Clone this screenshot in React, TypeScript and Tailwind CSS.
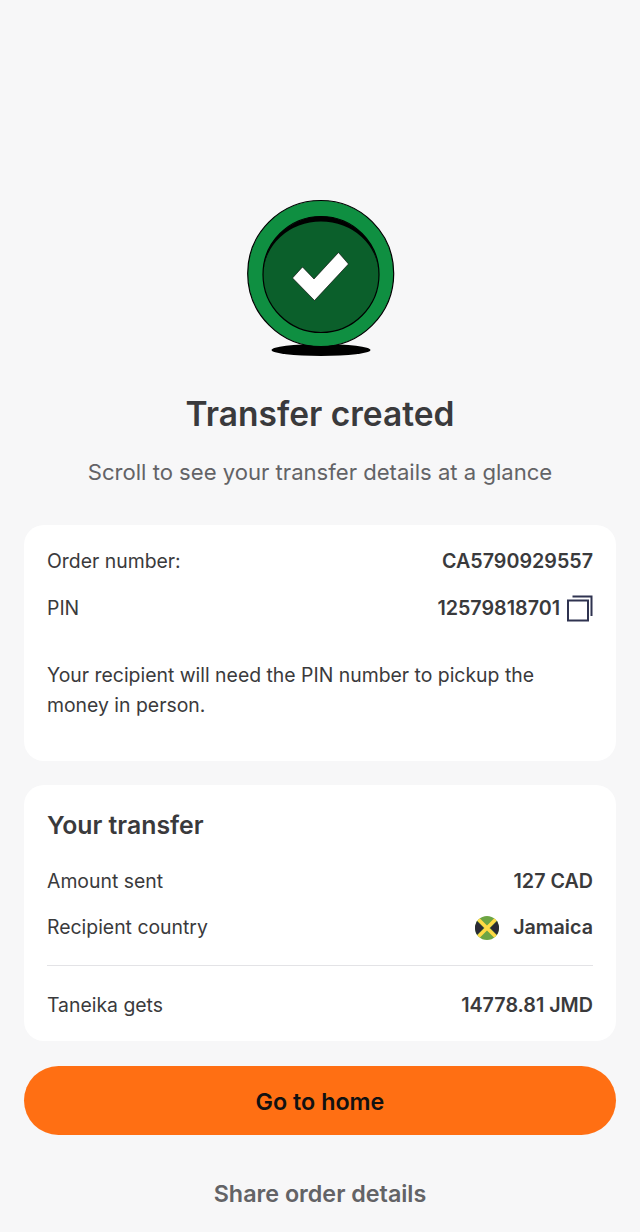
import React from "react";

function SuccessBadge() {
  return (
    <svg width="180" height="180" viewBox="0 0 180 180" className="block">
      <ellipse cx="91" cy="160" rx="49.5" ry="6" fill="#000" />
      <circle cx="90.7" cy="83.5" r="73" fill="#0f8f41" stroke="#000" strokeWidth="1.2" />
      <circle cx="91" cy="84.5" r="58" fill="#0b5f2b" stroke="#000" strokeWidth="1.2" />
      <path d="M33.5 84 A57.5 57.5 0 0 1 148.5 84 A57.5 52.5 0 0 0 33.5 84 Z" fill="#000" />
      <polygon points="62.5,88 72.5,77 84,89 108.5,62.5 118.5,74 84.5,110.5" fill="#fff" stroke="#000" strokeWidth="0.6" />
    </svg>
  );
}

function CopyIcon() {
  return (
    <svg width="28" height="28" viewBox="0 0 28 28" fill="none" stroke="#2f3350" strokeWidth="2">
      <rect x="2" y="6.5" width="20" height="20" />
      <path d="M6.5 2.5H25.5V22" />
    </svg>
  );
}

function JamaicaFlag() {
  return (
    <svg width="24" height="24" viewBox="0 0 24 24" className="block">
      <defs>
        <clipPath id="flag-clip">
          <circle cx="12" cy="12" r="12" />
        </clipPath>
      </defs>
      <g clipPath="url(#flag-clip)">
        <rect width="24" height="24" fill="#6da544" />
        <polygon points="0,3 9,12 0,21" fill="#2a2a35" />
        <polygon points="24,3 15,12 24,21" fill="#2a2a35" />
        <path d="M0 0 L24 24 M24 0 L0 24" stroke="#ffda44" strokeWidth="3.5" />
      </g>
    </svg>
  );
}

function Row({ label, children }: { label: string; children: React.ReactNode }) {
  return (
    <div className="flex items-center justify-between h-[28px] pt-[2px] text-[19.4px] text-[#3a3a3c]">
      <span>{label}</span>
      <span className="flex items-center font-semibold text-[19.7px]">{children}</span>
    </div>
  );
}

export default function App() {
  return (
    <div
      className="w-[640px] h-[1232px] overflow-hidden bg-[#f7f7f8] flex flex-col items-center pt-[190px]"
      style={{ fontFamily: "Inter, sans-serif" }}
    >
      <SuccessBadge />
      <h1 className="mt-[24px] text-[33.5px] leading-[40px] font-semibold text-[#3a3a3c]">Transfer created</h1>
      <p className="mt-[23px] text-[22.1px] leading-[30px] text-[#636366]">
        Scroll to see your transfer details at a glance
      </p>

      <div className="mt-[38px] w-[592px] h-[236px] bg-white rounded-[20px] px-[23px] pt-[22px]">
        <Row label="Order number:">CA5790929557</Row>
        <div className="mt-[19px]">
          <Row label="PIN">
            12579818701
            <span className="ml-[6px] -mr-[1px] -mt-[2px]">
              <CopyIcon />
            </span>
          </Row>
        </div>
        <p className="mt-[38px] text-[19.4px] leading-[30px] text-[#3a3a3c]">
          Your recipient will need the PIN number to pickup the money in person.
        </p>
      </div>

      <div className="mt-[24px] w-[592px] h-[256px] bg-white rounded-[20px] px-[23px] pt-[24px]">
        <h2 className="text-[24.8px] leading-[32px] font-semibold text-[#3a3a3c]">Your transfer</h2>
        <div className="mt-[26px]">
          <Row label="Amount sent">127 CAD</Row>
        </div>
        <div className="mt-[18px]">
          <Row label="Recipient country">
            <span className="mr-[14px]">
              <JamaicaFlag />
            </span>
            Jamaica
          </Row>
        </div>
        <div className="mt-[24px] border-t border-[#e3e3e6]" />
        <div className="mt-[25px]">
          <Row label="Taneika gets">14778.81 JMD</Row>
        </div>
      </div>

      <button className="mt-[25px] w-[592px] h-[69px] pt-[3px] rounded-full bg-[#ff6f13] text-[23.3px] font-semibold text-[#111]">
        Go to home
      </button>
      <button className="mt-[44px] text-[23.3px] leading-[30px] font-semibold text-[#636366]">
        Share order details
      </button>
    </div>
  );
}
